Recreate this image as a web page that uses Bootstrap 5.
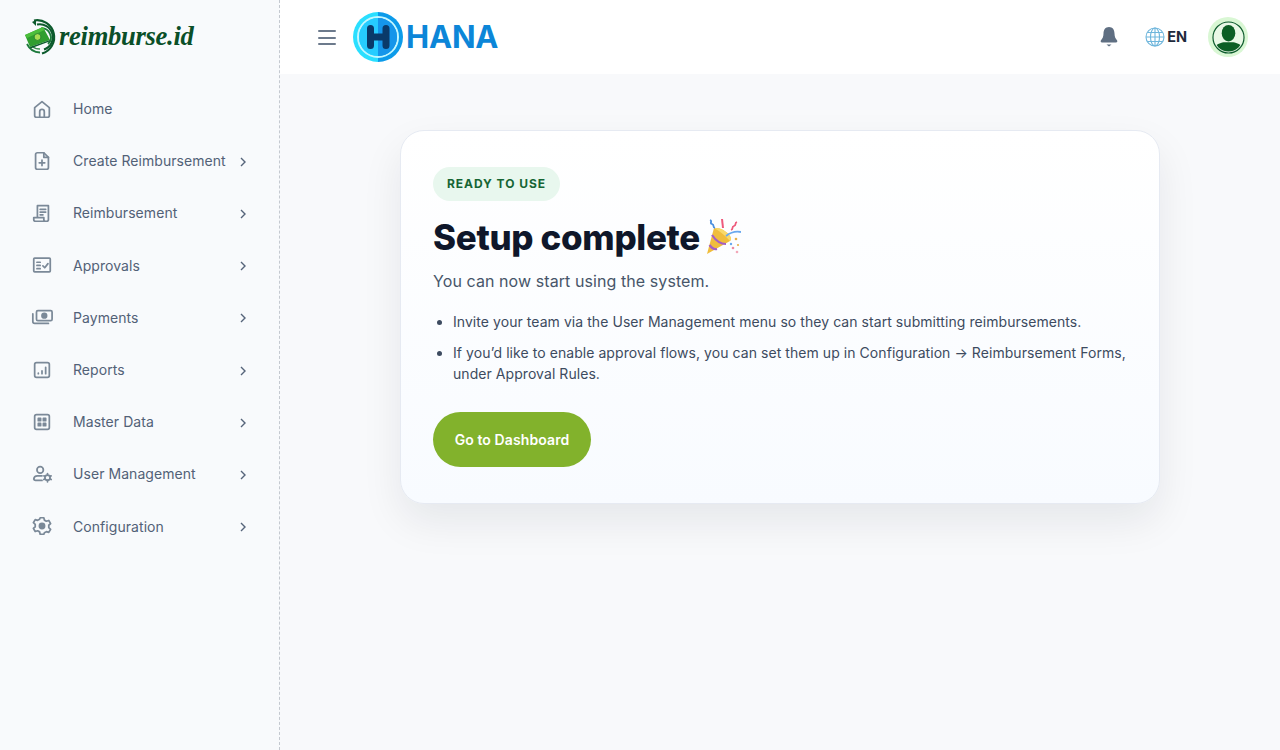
<!DOCTYPE html>
<html lang="en">
<head>
    <meta charset="UTF-8">
    <title>Setup complete</title>
    <link href="https://cdn.jsdelivr.net/npm/bootstrap@5.3.0/dist/css/bootstrap.min.css" rel="stylesheet">
    <style>
        html, body { height: 100%; }
        body { background: #f8f9fb; font-family: Inter, "Liberation Sans", sans-serif; overflow: hidden; }
        .side-panel { width: 280px; height: 750px; background: #f8fafc; border-right: 1px dashed #c4c9d0; flex-shrink: 0; }
        .brand-row { height: 74px; padding-left: 24px; padding-top: 17px; gap: 1px; }
        .brand-word { font-family: "Liberation Serif", serif; font-style: italic; font-weight: 700; font-size: 26.6px; line-height: 38px; color: #0a4f28; letter-spacing: -.3px; }
        .side-menu { padding: 8.5px 0 0 31px; margin: 0; list-style: none; }
        .side-item { height: 52.2px; display: flex; align-items: center; color: #526177; font-size: 14px; font-weight: 400; letter-spacing: .06px; }
        .side-item svg.ico { width: 22px; height: 22px; flex-shrink: 0; margin-right: 20px; stroke: #7b8998; fill: none; stroke-width: 1.9; stroke-linecap: round; stroke-linejoin: round; }
        .side-item .lbl { flex-grow: 1; }
        .side-item svg.chev { width: 10px; height: 10px; margin-right: 31px; stroke: #55647a; fill: none; stroke-width: 1.4; margin-top: 2px; }
        .top-head { height: 74px; background: #fff; padding: 0 32px 0 38px; }
        .burger { width: 18px; display: flex; flex-direction: column; gap: 4.5px; margin: 1px 17px 0 0; }
        .burger span { display: block; height: 2px; background: #6c7a8c; border-radius: 1px; }
        .hana-word { font-family: Inter, sans-serif; font-weight: 700; font-size: 31px; color: #0c86d8; margin-left: 3px; letter-spacing: -.2px; }
        .lang-code { font-size: 14.5px; font-weight: 700; color: #1e293b; margin-left: 2px; }
        .bell-ico { margin-right: 27px; }
        .user-halo { width: 40px; height: 40px; border-radius: 50%; background: #d9f7d4; display: flex; align-items: center; justify-content: center; margin-left: 21px; }
        .done-card { width: 760px; margin: 56px auto 0 120px; padding: 36px 32px; background: linear-gradient(180deg, #ffffff 0%, #f8fbff 100%); border: 1px solid #e6eaf2; border-radius: 24px; box-shadow: 0 18px 40px rgba(15, 23, 42, .08); }
        .ready-tag { display: inline-block; background: #e8f7ee; color: #166534; font-size: 12px; font-weight: 700; letter-spacing: .95px; line-height: 34px; height: 34px; padding: 0 14px; border-radius: 17px; }
        .done-title { font-size: 34.9px; font-weight: 800; color: #0f172a; line-height: 40px; margin: 16px 0 0; letter-spacing: -.3px; display: flex; align-items: center; gap: 3px; }
        .done-lead { font-size: 16px; color: #475569; margin: 12px 0 0; line-height: 24px; letter-spacing: .08px; }
        .done-list { margin: 18px -4px 0 0; padding-left: 20px; color: #3d4b60; font-size: 14px; line-height: 21px; letter-spacing: .06px; }
        .done-list li { margin-bottom: 10px; }
        .done-list li:last-child { margin-bottom: 0; }
        .go-btn { background: #82b22c; border: 0; color: #fff; font-weight: 600; font-size: 14px; letter-spacing: .1px; height: 55px; width: 158px; border-radius: 28px; margin-top: 28px; padding: 0; }
        .go-btn:hover { background: #82b22c; color: #fff; }
    </style>
</head>
<body>
    <div class="d-flex">
        <aside class="side-panel">
            <div class="brand-row d-flex align-items-start">
                <svg width="34" height="38" viewBox="0 0 34 38" fill="none">
                    <path d="M10 3.500A17 17 0 0 1 18 36.500" stroke="#0c5a2c" stroke-width="2.200"/>
                    <path d="M13 7.500A13 13 0 0 1 20 32.500" stroke="#0c5a2c" stroke-width="2"/>
                    <path d="M17 11.500A9 9 0 0 1 24 27" stroke="#1d7a3c" stroke-width="1.800"/>
                    <path d="M3 27A15 15 0 0 0 16 35.500" stroke="#1d7a3c" stroke-width="1.800"/>
                    <path d="M8 29A11 11 0 0 0 16 32" stroke="#3a8f50" stroke-width="1.400"/>
                    <path d="M8 5 12 3 12 9Z" fill="#0c5a2c"/>
                    <path d="M1 18 19 10 26 23 6 30Z" fill="#2f9e2f"/>
                    <path d="M1 18 19 10 20.500 13 3 21Z" fill="#4cbf3c"/>
                    <path d="M6 30 26 23 25.500 24.500 6.500 31.500Z" fill="#0c5a2c"/>
                    <circle cx="13.500" cy="20" r="3.400" fill="#a6dc52" stroke="#1a7a2c" stroke-width=".8"/>
                </svg>
                <span class="brand-word">reimburse.id</span>
            </div>
            <ul class="side-menu">
                <li class="side-item">
                    <svg class="ico" viewBox="0 0 24 24"><path d="M4 10.500 12 4l8 6.500V19a2 2 0 0 1-2 2H6a2 2 0 0 1-2-2Z"/><path d="M9.500 21v-6a2.500 2.500 0 0 1 5 0v6"/></svg>
                    <span class="lbl">Home</span>
                </li>
                <li class="side-item">
                    <svg class="ico" viewBox="0 0 24 24"><path d="M14 3H7a2 2 0 0 0-2 2v14a2 2 0 0 0 2 2h10a2 2 0 0 0 2-2V8Z"/><path d="M14 3v5h5M12 11v6M9 14h6"/></svg>
                    <span class="lbl">Create Reimbursement</span>
                    <svg class="chev" viewBox="0 0 10 10"><path d="M3 1l4 4-4 4"/></svg>
                </li>
                <li class="side-item">
                    <svg class="ico" viewBox="0 0 24 24"><path d="M7 17V4h12v15a2 2 0 0 1-2 2H5a2 2 0 0 1-2-2v-2h11v2a2 2 0 0 0 2 2"/><path d="M10 8h6M10 11h6M10 14h3"/></svg>
                    <span class="lbl">Reimbursement</span>
                    <svg class="chev" viewBox="0 0 10 10"><path d="M3 1l4 4-4 4"/></svg>
                </li>
                <li class="side-item">
                    <svg class="ico" viewBox="0 0 24 24"><rect x="3" y="4.500" width="18" height="15" rx="1"/><path d="M6.500 9H10M6.500 12.500H10M6.500 16H10M13 13l2 2 3.500-4.500"/></svg>
                    <span class="lbl">Approvals</span>
                    <svg class="chev" viewBox="0 0 10 10"><path d="M3 1l4 4-4 4"/></svg>
                </li>
                <li class="side-item">
                    <svg class="ico" viewBox="0 0 24 24"><rect x="6" y="5" width="17" height="11" rx="1.500"/><circle cx="14.500" cy="10.500" r="2.500" fill="#7b8998"/><path d="M2 8.500V17a2 2 0 0 0 2 2h15"/></svg>
                    <span class="lbl">Payments</span>
                    <svg class="chev" viewBox="0 0 10 10"><path d="M3 1l4 4-4 4"/></svg>
                </li>
                <li class="side-item">
                    <svg class="ico" viewBox="0 0 24 24"><rect x="4" y="4" width="16" height="16" rx="2"/><path d="M8 16v-.5M12 16v-3M16 16V9"/></svg>
                    <span class="lbl">Reports</span>
                    <svg class="chev" viewBox="0 0 10 10"><path d="M3 1l4 4-4 4"/></svg>
                </li>
                <li class="side-item">
                    <svg class="ico" viewBox="0 0 24 24"><rect x="4" y="4" width="16" height="16" rx="2"/><rect x="8" y="8" width="2.500" height="2.500" fill="#7b8998"/><rect x="13.500" y="8" width="2.500" height="2.500" fill="#7b8998"/><rect x="8" y="13.500" width="2.500" height="2.500" fill="#7b8998"/><rect x="13.500" y="13.500" width="2.500" height="2.500" fill="#7b8998"/></svg>
                    <span class="lbl">Master Data</span>
                    <svg class="chev" viewBox="0 0 10 10"><path d="M3 1l4 4-4 4"/></svg>
                </li>
                <li class="side-item">
                    <svg class="ico" viewBox="0 0 24 24"><circle cx="10" cy="7.500" r="3.500"/><path d="M12 14H7a4 4 0 0 0-4 3.500A2 2 0 0 0 5 19h7"/><circle cx="18" cy="16" r="2.800"/><path d="M18 11.500v1.500M18 19v1.500M14 14l1.300.8M20.700 17.200l1.300.8M14 18l1.300-.8M20.700 14.800l1.300-.8"/></svg>
                    <span class="lbl">User Management</span>
                    <svg class="chev" viewBox="0 0 10 10"><path d="M3 1l4 4-4 4"/></svg>
                </li>
                <li class="side-item">
                    <svg class="ico" viewBox="0 0 24 24"><path d="M10 3h4l.6 2.600 2.200 1.200 2.600-.8 2 3.400-2 1.800v2.600l2 1.800-2 3.400-2.600-.8-2.200 1.200L14 21h-4l-.6-2.600-2.200-1.200-2.600.8-2-3.400 2-1.800v-2.600l-2-1.800 2-3.400 2.600.8 2.200-1.200Z"/><circle cx="12" cy="12" r="2.800" fill="#7b8998"/></svg>
                    <span class="lbl">Configuration</span>
                    <svg class="chev" viewBox="0 0 10 10"><path d="M3 1l4 4-4 4"/></svg>
                </li>
            </ul>
        </aside>

        <div class="flex-grow-1">
            <header class="top-head d-flex align-items-center">
                <div class="burger"><span></span><span></span><span></span></div>
                <svg width="50" height="50" viewBox="0 0 50 50">
                    <path d="M25 0a25 25 0 0 0 0 50Z" fill="#2adfff"/>
                    <path d="M25 0a25 25 0 0 1 0 50Z" fill="#0c9bea"/>
                    <circle cx="25" cy="25" r="20" fill="none" stroke="#c2f6ff" stroke-width="2"/>
                    <path d="M25 6a19 19 0 0 0 0 38Z" fill="#26ccff"/>
                    <path d="M25 6a19 19 0 0 1 0 38Z" fill="#1595ea"/>
                    <path d="M17.500 16.500v17M33 16.500v17M17.500 25H33" stroke="#0a3a6a" stroke-width="7" stroke-linecap="round" fill="none"/>
                </svg>
                <span class="hana-word">HANA</span>
                <div class="ms-auto d-flex align-items-center">
                    <svg width="18" height="22" viewBox="0 0 18 22" class="bell-ico"><path d="M9 1c3.600 0 5.500 2.800 5.500 6.500 0 3.600 1.200 5.300 2.500 6.700.7.8.3 2.300-1 2.300H2c-1.300 0-1.700-1.500-1-2.300C2.300 12.800 3.500 11.100 3.500 7.500 3.500 3.800 5.400 1 9 1Z" fill="#5f6f82"/><path d="M6.500 18.500h5L9 20.500Z" fill="#5f6f82"/></svg>
                    <svg width="20" height="20" viewBox="0 0 20 20" fill="none" stroke="#6fb6dc" stroke-width="1.100"><circle cx="10" cy="10" r="9"/><ellipse cx="10" cy="10" rx="4.500" ry="9"/><path d="M10 1v18M1 10h18M2.500 5.500h15M2.500 14.500h15"/></svg>
                    <span class="lang-code">EN</span>
                    <div class="user-halo">
                        <svg width="33" height="33" viewBox="0 0 34 34">
                            <circle cx="17" cy="17" r="16" fill="#e9f8e6" stroke="#0c5a2c" stroke-width="1.200"/>
                            <clipPath id="avatarClip"><circle cx="17" cy="17" r="14.500"/></clipPath>
                            <g clip-path="url(#avatarClip)" fill="#0c5f25">
                                <ellipse cx="17" cy="12.500" rx="7" ry="8.500"/>
                                <path d="M1 34c0-9 6-11 11-12h10c5 1 11 3 11 12Z"/>
                            </g>
                        </svg>
                    </div>
                </div>
            </header>

            <main>
                <div class="done-card">
                    <span class="ready-tag">READY TO USE</span>
                    <h1 class="done-title">Setup complete
                        <svg width="38" height="36" viewBox="0 0 38 36">
                            <path d="M4 35 11 9Q20 8 27 17 29 20 27 22Z" fill="#f0bd3c"/>
                            <path d="M11 9Q20 8 27 17 29 20 27 22 20 14 11 9Z" fill="#f9d96a"/>
                            <path d="M9 16Q15 25 23 25M6.500 26Q10 31 14 30" stroke="#a45fc4" stroke-width="2.200" fill="none"/>
                            <path d="M7 1c3 1-1 3 2 4s0 3 3 4" stroke="#4a8fe0" stroke-width="1.800" fill="none"/>
                            <path d="M19 0l1 9" stroke="#ee5a7c" stroke-width="2" fill="none"/>
                            <path d="M34 3c-3 1 0 3-3 4s0 3-3 4" stroke="#ee5a7c" stroke-width="1.800" fill="none"/>
                            <path d="M23 17c5-4 10-5 15-4" stroke="#6aa8ee" stroke-width="1.800" fill="none"/>
                            <circle cx="33" cy="20" r="1.300" fill="#e8b04a"/><circle cx="28" cy="25" r="1.200" fill="#6aa8ee"/><circle cx="35" cy="26" r="1.100" fill="#e8b04a"/><circle cx="30" cy="29" r="1.300" fill="#ee8aa0"/><circle cx="34" cy="33" r="1.300" fill="#f2a8b8"/>
                        </svg>
                    </h1>
                    <p class="done-lead">You can now start using the system.</p>
                    <ul class="done-list">
                        <li>Invite your team via the User Management menu so they can start submitting reimbursements.</li>
                        <li>If you’d like to enable approval flows, you can set them up in Configuration → Reimbursement Forms, under Approval Rules.</li>
                    </ul>
                    <button type="button" class="btn go-btn">Go to Dashboard</button>
                </div>
            </main>
        </div>
    </div>
    <script src="https://cdn.jsdelivr.net/npm/bootstrap@5.3.0/dist/js/bootstrap.bundle.min.js"></script>
</body>
</html>
